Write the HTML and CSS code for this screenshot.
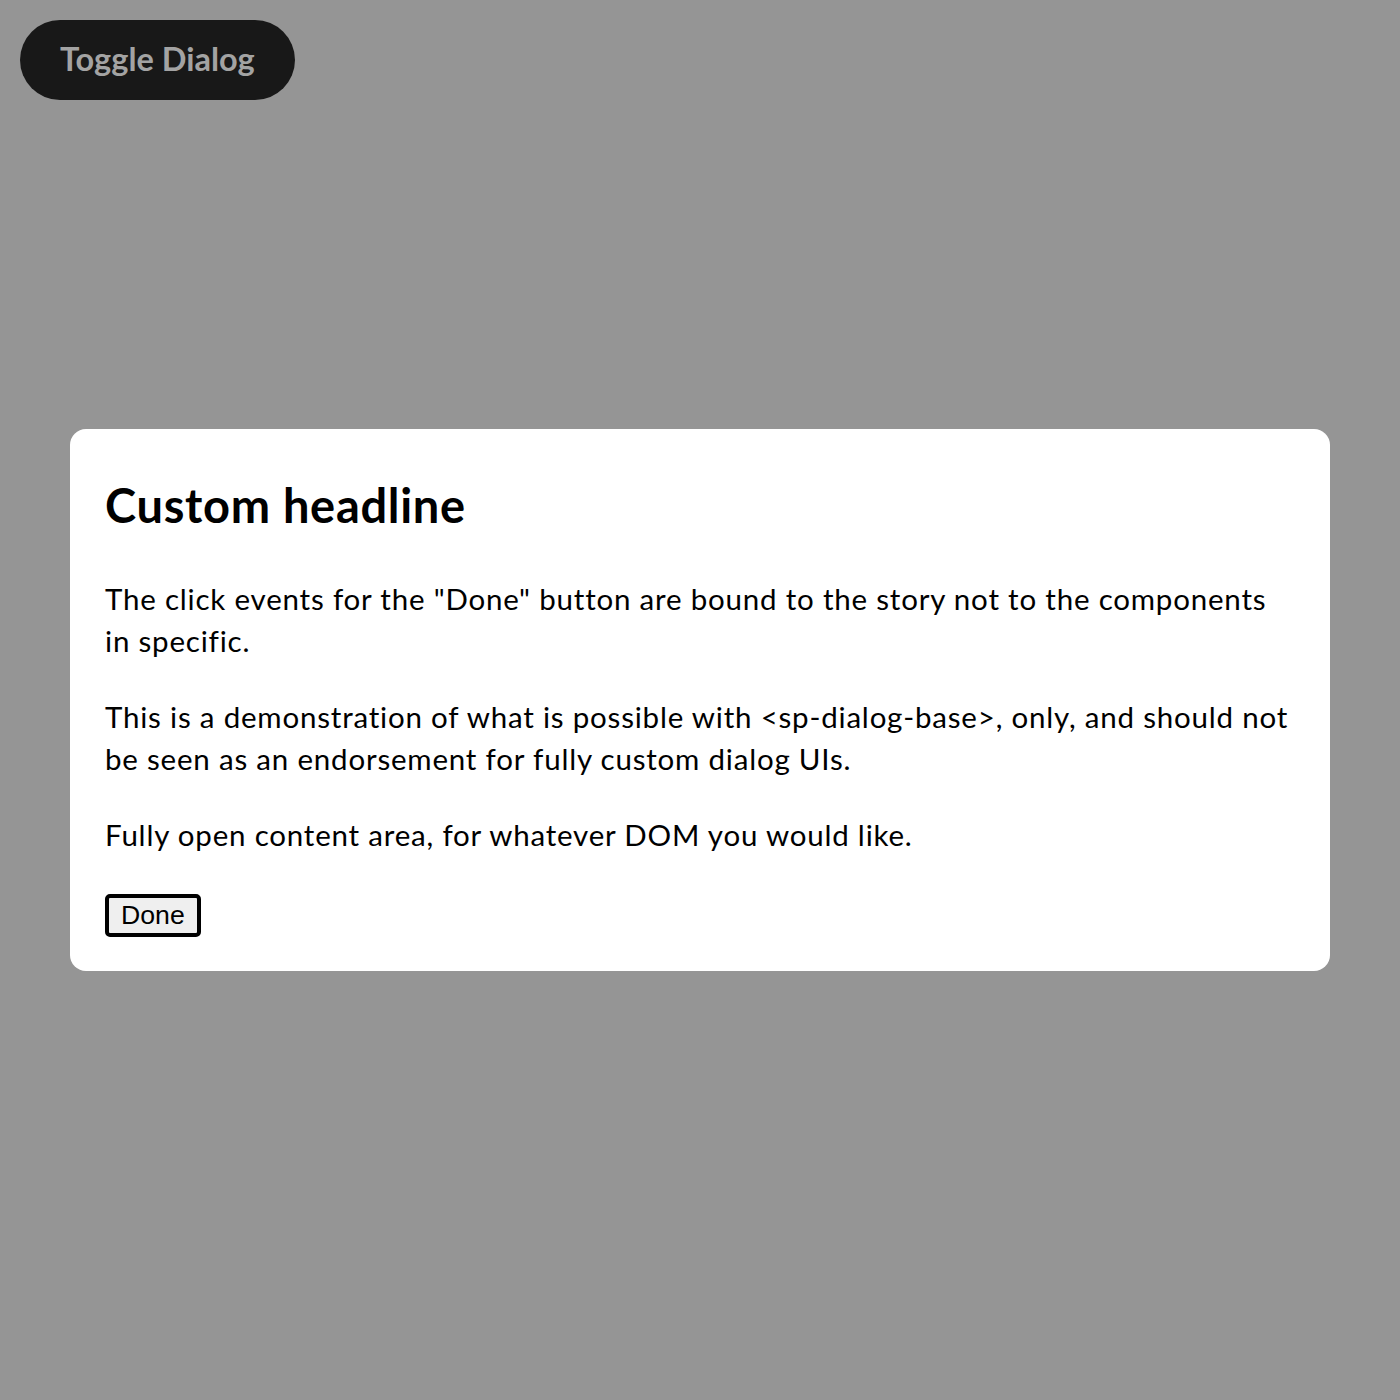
FILE: index.html
```html
<!DOCTYPE html>
<html lang="en">
<head>
<meta charset="utf-8">
<title>Custom dialog</title>
<link rel="stylesheet" href="styles.css">
</head>
<body>
<div class="page">
  <button class="toggle" type="button">Toggle Dialog</button>
</div>
<div class="underlay">
  <div class="dialog" role="dialog">
    <h2 class="headline">Custom headline</h2>
    <p class="copy">The click events for the "Done" button are bound to the story not to the components in&nbsp;specific.</p>
    <p class="copy">This is a demonstration of what is possible with &lt;sp-dialog-base&gt;, only, and should not be seen as an endorsement for fully custom dialog UIs.</p>
    <p class="copy">Fully open content area, for whatever DOM you would like.</p>
    <button class="done" type="button">Done</button>
  </div>
</div>
</body>
</html>
```
FILE: styles.css
```css
html, body {
  margin: 0;
  padding: 0;
  background: #959595;
  height: 100%;
}
body {
  font-family: Lato, "Noto Sans", sans-serif;
  font-variant-ligatures: none;
}
.page {
  padding: 20px;
}
.toggle {
  height: 80px;
  padding: 0 40px;
  border: none;
  border-radius: 40px;
  background: #181818;
  color: #a3a3a3;
  font-family: Lato, sans-serif;
  font-weight: 700;
  font-size: 32.5px;
  padding-bottom: 4px;
}
.underlay {
  position: fixed;
  inset: 0;
  display: flex;
  align-items: center;
  justify-content: center;
}
.dialog {
  width: 90%;
  box-sizing: border-box;
  background: #fff;
  border-radius: 16px;
  padding: 46px 30px 34px 35px;
  color: #000;
}
.headline {
  margin: 0 0 41px 0;
  font-size: 47px;
  letter-spacing: 0.7px;
  line-height: 1.3;
  font-weight: 700;
}
.copy {
  margin: 0 0 34px 0;
  font-size: 29.5px;
  letter-spacing: 0.8px;
  line-height: 42px;
}
.copy:nth-of-type(3) {
  margin-bottom: 38px;
}
.done {
  font-family: "Liberation Sans", Arial, sans-serif;
  font-size: 26.67px;
  line-height: normal;
  padding: 2px 12px;
  border: 4px solid #000;
  border-radius: 5px;
  background: #efefef;
  color: #000;
  display: block;
}
```
